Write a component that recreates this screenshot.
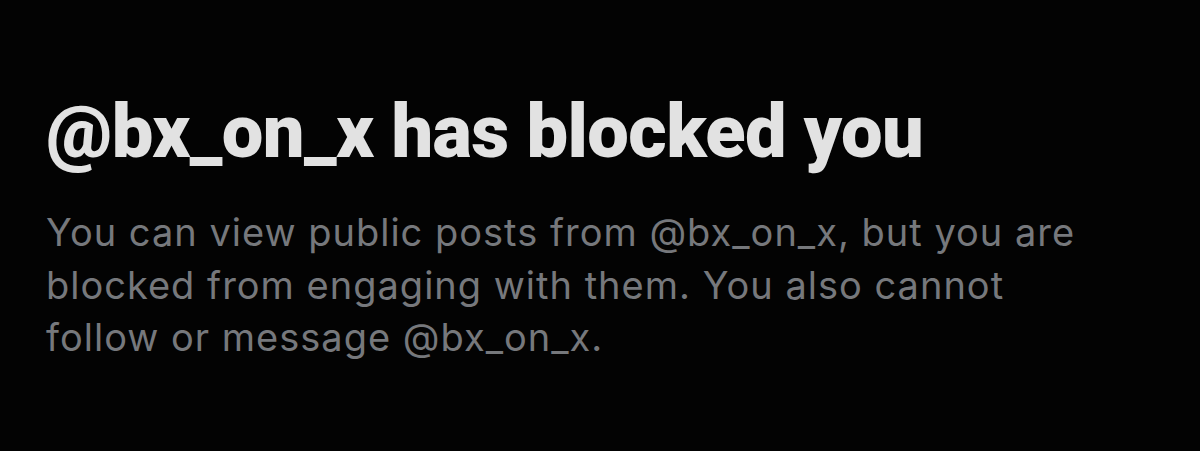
import React from "react";

export default function App() {
  return (
    <div className="w-[1200px] h-[451px] bg-[#030303] overflow-hidden">
      <div className="pl-[46px] pt-[92px]">
        <h1 className="text-[74px] leading-[80px] font-black tracking-[-0.6px] text-[#e2e2e2] [font-family:Roboto,'Liberation_Sans',sans-serif]">
          @bx_on_x has blocked you
        </h1>
        <p className="mt-[34px] text-[38px] leading-[52.5px] tracking-[1px] text-[#76787c] [font-family:Inter,'Liberation_Sans',sans-serif]">
          You can view public posts from @bx_on_x, but you are
          <br />
          blocked from engaging with them. You also cannot
          <br />
          follow or message @bx_on_x.
        </p>
      </div>
    </div>
  );
}
